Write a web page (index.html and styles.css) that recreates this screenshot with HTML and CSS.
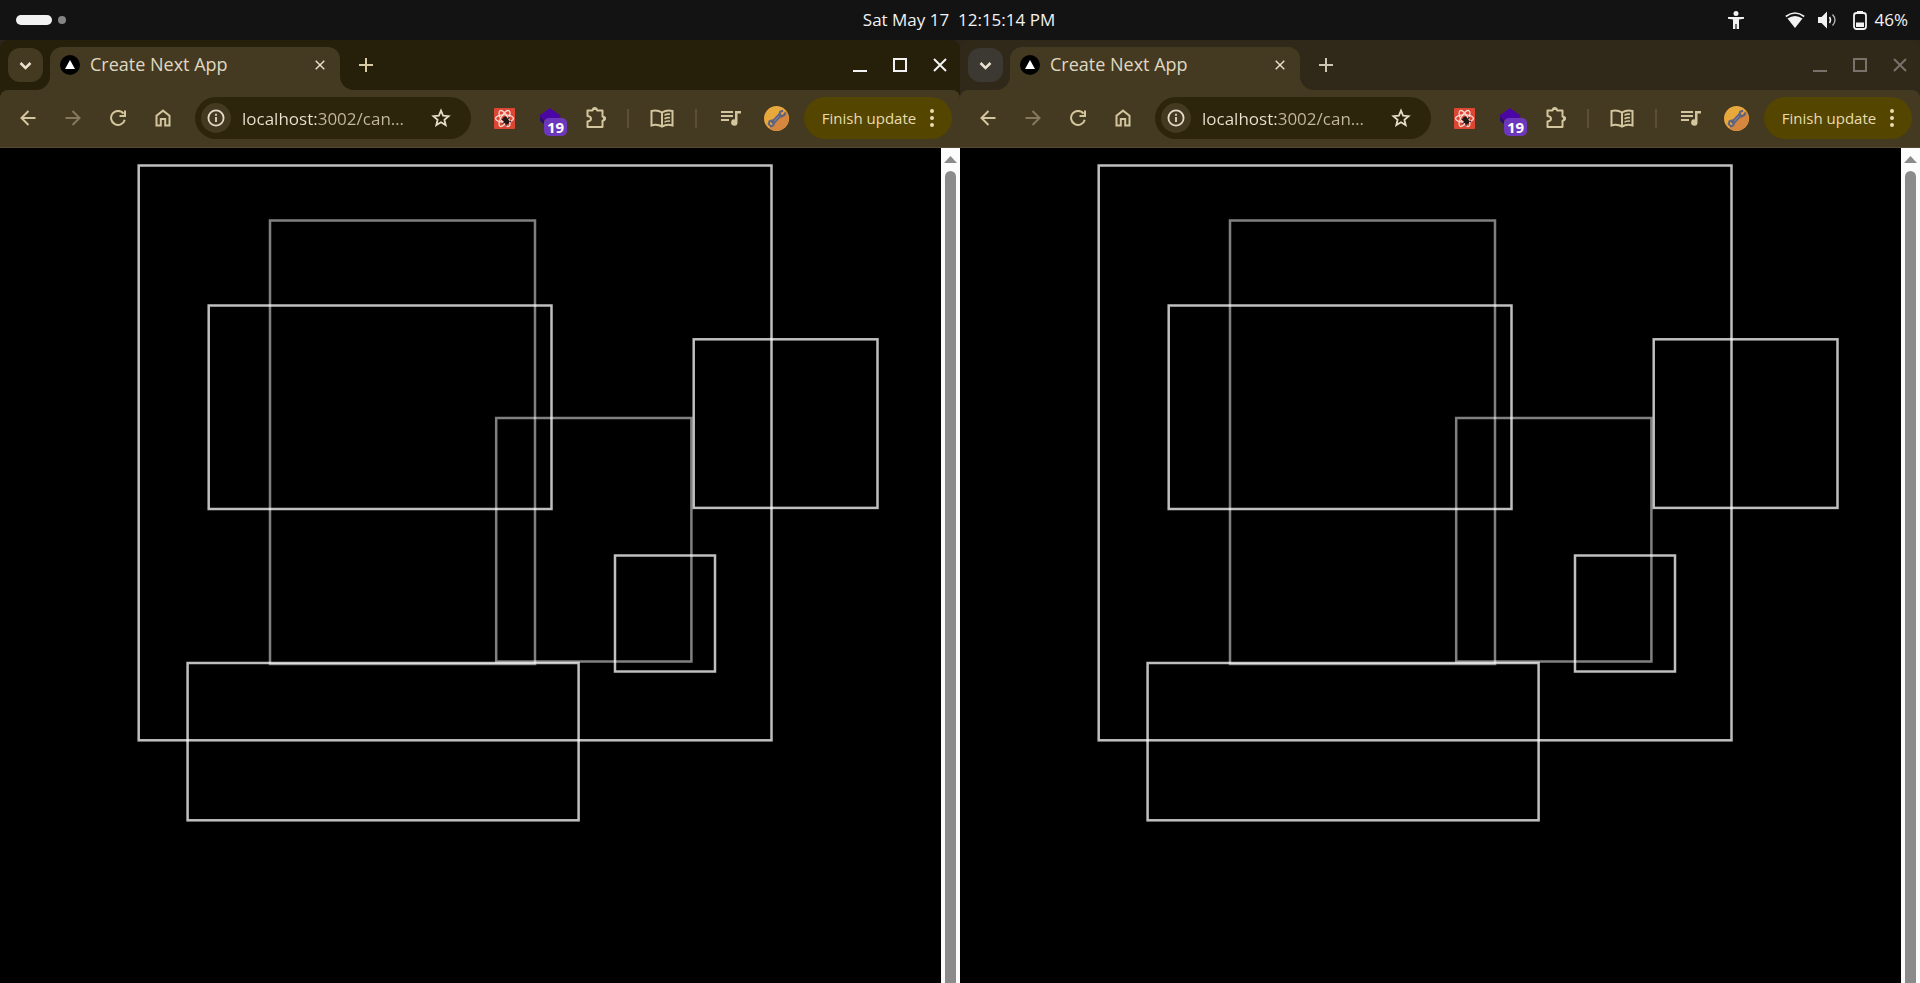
FILE: index.html
```html
<!DOCTYPE html>
<html lang="en">
<head>
<meta charset="utf-8">
<title>Desktop</title>
<link rel="stylesheet" href="styles.css">
</head>
<body>
<svg class="sprite" aria-hidden="true">
  <symbol id="chevron" viewBox="0 0 12 12"><path d="M2 4l4 4 4-4" fill="none" stroke="currentColor" stroke-width="2"/></symbol>
  <symbol id="triangle" viewBox="0 0 20 20"><circle cx="10" cy="10" r="10" fill="#000"/><path d="M10 5l5 9H5z" fill="#fff"/></symbol>
  <symbol id="cross" viewBox="0 0 14 14"><path d="M1 1l12 12M13 1L1 13" fill="none" stroke="currentColor" stroke-width="2"/></symbol>
  <symbol id="plus" viewBox="0 0 14 14"><path d="M7 0v14M0 7h14" fill="none" stroke="currentColor" stroke-width="2"/></symbol>
  <symbol id="minimize" viewBox="0 0 16 16"><path d="M1 14h14" stroke="currentColor" stroke-width="2"/></symbol>
  <symbol id="maximize" viewBox="0 0 16 16"><path d="M2 2h12v12H2z" fill="none" stroke="currentColor" stroke-width="2"/></symbol>
  <symbol id="back" viewBox="0 0 16 16"><path d="M15.500 8H2M8.500 1L1.500 8l7 7" fill="none" stroke="currentColor" stroke-width="2"/></symbol>
  <symbol id="forward" viewBox="0 0 16 16"><path d="M.5 8H14M7.500 1l7 7-7 7" fill="none" stroke="currentColor" stroke-width="2"/></symbol>
  <symbol id="reload" viewBox="0 0 16 16"><path d="M13.600 3.600A7 7 0 1 0 14.800 9.800M15 .5v5.500H9.500" fill="none" stroke="currentColor" stroke-width="2"/></symbol>
  <symbol id="home" viewBox="0 0 16 18"><path d="M1.500 16.500V6.700L8 1.600l6.500 5.100v9.800H10.200V10H5.800v6.500z" fill="none" stroke="currentColor" stroke-width="2"/></symbol>
  <symbol id="info" viewBox="0 0 18 18"><circle cx="9" cy="9" r="7.600" fill="none" stroke="currentColor" stroke-width="1.800"/><path d="M9 8v5M9 4.800v2" stroke="currentColor" stroke-width="1.800"/></symbol>
  <symbol id="star" viewBox="0 0 20 20"><path d="M10 2.600l2.100 5 5.500.5-4.200 3.600 1.300 5.400-4.700-2.900-4.700 2.900 1.300-5.400L2.400 8.100l5.500-.5z" fill="none" stroke="currentColor" stroke-width="1.800"/></symbol>
  <symbol id="atom" viewBox="0 0 21 21">
    <rect width="21" height="21" rx="1" fill="#db4733"/>
    <g fill="none" stroke="#f7dcd6" stroke-width="1.300"><ellipse cx="10.500" cy="10.500" rx="9" ry="3.600"/><ellipse cx="10.500" cy="10.500" rx="9" ry="3.600" transform="rotate(60 10.500 10.500)"/><ellipse cx="10.500" cy="10.500" rx="9" ry="3.600" transform="rotate(120 10.500 10.500)"/></g>
    <ellipse cx="12" cy="12.500" rx="2.400" ry="4" transform="rotate(-35 12 12.500)" fill="#231815"/><path d="M7.500 11l3 1.500M8.500 15.500l3-1.500M11 8.500v3M15.500 9l-2 2.500M17 13.500l-3-.5M12 18v-3M10 9l2 2" stroke="#231815" stroke-width="1.200"/>
  </symbol>
  <symbol id="cap" viewBox="0 0 22 22"><path d="M11 1l11 8-11 8L0 9z" fill="#4b06a6"/><path d="M1 10l4 3v4l-4-3z" fill="#2c0a72"/></symbol>
  <symbol id="puzzle" viewBox="0 0 22 22"><path d="M2.500 3.500H7.500Q8 1 9.800 1T12.200 3.500H17.500V9.500Q20 10 20 11.500T17.500 13.800V20H2.500V14.500Q6 14 6 11.700T2.500 9z" fill="none" stroke="currentColor" stroke-width="2" stroke-linejoin="round"/><path d="M7.500 3q.5-2.600 2.300-2.600T12.200 3zM18 9.300q3 .3 3 2.200t-3 2.300z" fill="currentColor"/></symbol>
  <symbol id="book" viewBox="0 0 24 19"><path d="M12 3.500Q7 .3 1.500 2V16.500Q7 14.800 12 17.500 17 14.800 22.500 16.500V2Q17 .3 12 3.500zV17" fill="none" stroke="currentColor" stroke-width="2"/><path d="M14.500 6.300q2.500-1.500 5.500-1M14.500 9.700q2.500-1.500 5.500-1M14.500 13.100q2.500-1.500 5.500-1" fill="none" stroke="currentColor" stroke-width="1.600"/></symbol>
  <symbol id="queue" viewBox="0 0 20 16"><path d="M0 2h12M0 6h12M0 10h8" stroke="currentColor" stroke-width="2"/><path d="M14 1h6v2.500h-3.500V12.500a3.200 3.200 0 1 1-2.500-3.100z" fill="currentColor"/></symbol>
  <symbol id="wrench" viewBox="0 0 25 25"><circle cx="12.500" cy="12.500" r="12.500" fill="#e9a83b"/><path d="M22 4.500A12.500 12.500 0 0 1 5 22.500z" fill="#d5873f"/><path d="M8 17.500L17 8" stroke="#5f6380" stroke-width="4"/><path d="M9 16.500l7.500-8" stroke="#8a8aa5" stroke-width="1"/><path d="M19 4.500l-3 1.500-.5 3 2 1.500 3-1.500.7-2.500M7 20.500l2.500-1.500.5-2.500-2-2-2.500.8-.8 2.700z" fill="none" stroke="#5f6380" stroke-width="2"/></symbol>
  <symbol id="dots" viewBox="0 0 4 18"><g fill="currentColor"><circle cx="2" cy="2" r="2"/><circle cx="2" cy="9" r="2"/><circle cx="2" cy="16" r="2"/></g></symbol>
  <symbol id="flare" viewBox="0 0 14 14"><path d="M0 14A14 14 0 0 0 14 0v14z" fill="currentColor"/></symbol>
  <symbol id="arrow-up" viewBox="0 0 13 7"><path d="M6.500 0L13 7H0z" fill="#8b8b8b"/></symbol>
  <symbol id="drawing" viewBox="0 0 941 835">
    <g fill="none" stroke="#fff" stroke-width="2.500">
      <g stroke-opacity=".75">
        <rect x="138.700" y="17.500" width="632.800" height="574.800"/>
        <rect x="208.700" y="157.500" width="342.800" height="203.500"/>
        <rect x="693.700" y="191.300" width="183.800" height="168.600"/>
        <rect x="615" y="407.500" width="100" height="116"/>
        <rect x="187.600" y="515" width="391" height="157.300"/>
      </g>
      <g stroke-opacity=".5">
        <rect x="270" y="72.500" width="265" height="443.500"/>
        <rect x="496.200" y="270" width="195.200" height="243.500"/>
      </g>
    </g>
  </symbol>
  <symbol id="person" viewBox="0 0 16 18"><circle cx="8" cy="2.500" r="2.500" fill="currentColor"/><path d="M0 6h16v1.800l-5 .7V18H8.600v-5H7.400v5H5V8.500L0 7.800z" fill="currentColor"/></symbol>
  <symbol id="wifi" viewBox="0 0 20 16"><path d="M.8 4.500Q10-2.500 19.200 4.500" fill="none" stroke="currentColor" stroke-width="1.600"/><path d="M2.500 6.500Q10 1.500 17.500 6.500L10 16z" fill="currentColor"/></symbol>
  <symbol id="volume" viewBox="0 0 19 18"><path d="M0 6h3.500L9 .5v17L3.500 12H0z" fill="currentColor"/><path d="M11.500 6q2 3 0 6" fill="none" stroke="currentColor" stroke-width="1.500"/><path d="M14.500 3.500q5 5.500 0 11" fill="none" stroke="currentColor" stroke-width="1.300" opacity=".75"/></symbol>
  <symbol id="battery" viewBox="0 0 14 19"><path d="M4 0h6v2H4z" fill="currentColor"/><rect x="1" y="2" width="12" height="16" rx="2.500" fill="none" stroke="currentColor" stroke-width="1.800"/><path d="M3 11.500h8V16H3z" fill="currentColor"/></symbol>
</svg>

<header class="panel">
  <button class="workspaces" aria-label="Workspaces"><span class="workspace-current"></span><span class="workspace-dot"></span></button>
  <time class="clock">Sat May 17 &nbsp;12:15:14 PM</time>
  <div class="status">
    <button class="status-item access" aria-label="Accessibility"><svg width="16" height="18"><use href="#person"/></svg></button>
    <svg width="20" height="16"><use href="#wifi"/></svg>
    <svg width="19" height="18"><use href="#volume"/></svg>
    <span class="status-item power"><svg width="14" height="19"><use href="#battery"/></svg>46%</span>
  </div>
</header>

<main class="desktop">
  <section class="window">
    <div class="tab-strip">
      <button class="tab-search" aria-label="Search tabs"><svg width="15" height="15"><use href="#chevron"/></svg></button>
      <div class="tab">
        <svg class="flare flare-left" width="14" height="14"><use href="#flare"/></svg>
        <svg width="20" height="20"><use href="#triangle"/></svg>
        <span class="tab-title">Create Next App</span>
        <button class="tab-close" aria-label="Close tab"><svg width="10" height="10"><use href="#cross"/></svg></button>
        <svg class="flare flare-right" width="14" height="14"><use href="#flare"/></svg>
      </div>
      <button class="new-tab" aria-label="New tab"><svg width="14" height="14"><use href="#plus"/></svg></button>
      <div class="window-controls">
        <button aria-label="Minimize"><svg width="16" height="16"><use href="#minimize"/></svg></button>
        <button aria-label="Maximize"><svg width="16" height="16"><use href="#maximize"/></svg></button>
        <button aria-label="Close"><svg width="14" height="14"><use href="#cross"/></svg></button>
      </div>
    </div>
    <nav class="toolbar">
      <button class="nav-button" aria-label="Back"><svg width="16" height="16"><use href="#back"/></svg></button>
      <button class="nav-button disabled" aria-label="Forward"><svg width="16" height="16"><use href="#forward"/></svg></button>
      <button class="nav-button" aria-label="Reload"><svg width="16" height="16"><use href="#reload"/></svg></button>
      <button class="nav-button" aria-label="Home"><svg width="16" height="18"><use href="#home"/></svg></button>
      <div class="address">
        <button class="site-info" aria-label="Site information"><svg width="18" height="18"><use href="#info"/></svg></button>
        <input class="url" type="text" aria-label="Address" value="localhost:3002/can…">
        <button class="bookmark" aria-label="Bookmark"><svg width="20" height="20"><use href="#star"/></svg></button>
      </div>
      <div class="extensions">
        <button class="extension" aria-label="React tools"><svg width="21" height="21"><use href="#atom"/></svg></button>
        <button class="extension" aria-label="Extension, 19 items"><svg width="22" height="22"><use href="#cap"/></svg><span class="badge">19</span></button>
        <button class="extension" aria-label="Extensions"><svg width="22" height="22"><use href="#puzzle"/></svg></button>
        <span class="divider"></span>
        <button class="reading" aria-label="Reading mode"><svg width="24" height="19"><use href="#book"/></svg></button>
        <span class="divider"></span>
        <button class="media" aria-label="Media"><svg width="20" height="16"><use href="#queue"/></svg></button>
        <button class="profile" aria-label="Profile"><svg width="25" height="25"><use href="#wrench"/></svg></button>
      </div>
      <button class="update">Finish update<svg width="4" height="18"><use href="#dots"/></svg></button>
    </nav>
    <div class="page">
      <svg class="canvas" viewBox="0 0 941 835" role="img" aria-label="Rectangles"><use href="#drawing"/></svg>
      <div class="scrollbar"><svg width="13" height="7"><use href="#arrow-up"/></svg><span class="thumb"></span></div>
    </div>
  </section>

  <section class="window inactive">
    <div class="tab-strip">
      <button class="tab-search" aria-label="Search tabs"><svg width="15" height="15"><use href="#chevron"/></svg></button>
      <div class="tab">
        <svg class="flare flare-left" width="14" height="14"><use href="#flare"/></svg>
        <svg width="20" height="20"><use href="#triangle"/></svg>
        <span class="tab-title">Create Next App</span>
        <button class="tab-close" aria-label="Close tab"><svg width="10" height="10"><use href="#cross"/></svg></button>
        <svg class="flare flare-right" width="14" height="14"><use href="#flare"/></svg>
      </div>
      <button class="new-tab" aria-label="New tab"><svg width="14" height="14"><use href="#plus"/></svg></button>
      <div class="window-controls">
        <button aria-label="Minimize"><svg width="16" height="16"><use href="#minimize"/></svg></button>
        <button aria-label="Maximize"><svg width="16" height="16"><use href="#maximize"/></svg></button>
        <button aria-label="Close"><svg width="14" height="14"><use href="#cross"/></svg></button>
      </div>
    </div>
    <nav class="toolbar">
      <button class="nav-button" aria-label="Back"><svg width="16" height="16"><use href="#back"/></svg></button>
      <button class="nav-button disabled" aria-label="Forward"><svg width="16" height="16"><use href="#forward"/></svg></button>
      <button class="nav-button" aria-label="Reload"><svg width="16" height="16"><use href="#reload"/></svg></button>
      <button class="nav-button" aria-label="Home"><svg width="16" height="18"><use href="#home"/></svg></button>
      <div class="address">
        <button class="site-info" aria-label="Site information"><svg width="18" height="18"><use href="#info"/></svg></button>
        <input class="url" type="text" aria-label="Address" value="localhost:3002/can…">
        <button class="bookmark" aria-label="Bookmark"><svg width="20" height="20"><use href="#star"/></svg></button>
      </div>
      <div class="extensions">
        <button class="extension" aria-label="React tools"><svg width="21" height="21"><use href="#atom"/></svg></button>
        <button class="extension" aria-label="Extension, 19 items"><svg width="22" height="22"><use href="#cap"/></svg><span class="badge">19</span></button>
        <button class="extension" aria-label="Extensions"><svg width="22" height="22"><use href="#puzzle"/></svg></button>
        <span class="divider"></span>
        <button class="reading" aria-label="Reading mode"><svg width="24" height="19"><use href="#book"/></svg></button>
        <span class="divider"></span>
        <button class="media" aria-label="Media"><svg width="20" height="16"><use href="#queue"/></svg></button>
        <button class="profile" aria-label="Profile"><svg width="25" height="25"><use href="#wrench"/></svg></button>
      </div>
      <button class="update">Finish update<svg width="4" height="18"><use href="#dots"/></svg></button>
    </nav>
    <div class="page">
      <svg class="canvas" viewBox="0 0 941 835" role="img" aria-label="Rectangles"><use href="#drawing"/></svg>
      <div class="scrollbar"><svg width="13" height="7"><use href="#arrow-up"/></svg><span class="thumb"></span></div>
    </div>
  </section>
</main>
</body>
</html>
```
FILE: styles.css
```css
* { box-sizing: border-box; }

body {
  margin: 0;
  height: 100vh;
  display: flex;
  flex-direction: column;
  overflow: hidden;
  background: #000;
  font-family: "Open Sans", "Noto Sans", sans-serif;
  font-size: 18px;
}

svg { display: block; flex: none; }
.sprite { position: absolute; width: 0; height: 0; }

button {
  display: flex;
  align-items: center;
  justify-content: center;
  flex: none;
  margin: 0;
  padding: 0;
  border: 0;
  background: none;
  color: inherit;
  font: inherit;
}

/* Top panel */
.panel {
  display: grid;
  grid-template-columns: 1fr auto 1fr;
  align-items: center;
  height: 40px;
  padding: 0 12px 2px 16px;
  background: #131313;
  color: #f2f2f2;
  font-size: 17px;
}
.workspaces { justify-self: start; gap: 6px; padding-top: 2px; }
.workspace-current { width: 36px; height: 10px; border-radius: 5px; background: #f2f2f2; }
.workspace-dot { width: 8px; height: 8px; border-radius: 50%; background: #858585; }
.clock { padding-right: 6px; white-space: nowrap; }
.status { display: flex; align-items: center; justify-content: flex-end; gap: 13px; padding-top: 2px; }
.status-item { display: flex; align-items: center; line-height: 20px; }
.access { margin-right: 28px; }
.power { gap: 8px; margin-left: 3px; }

/* Browser windows */
.desktop { display: flex; flex: 1; min-height: 0; background: #2c271c; }
.window {
  --strip: #261f09;
  --search: #433a21;
  --controls: #f2f2f2;
  --plus: #d8caa4;
  display: flex;
  flex: 1;
  flex-direction: column;
  min-width: 0;
  overflow: hidden;
  border-radius: 8px 8px 0 0;
  background: var(--strip);
  color: #e9e2d0;
}
.window.inactive {
  --strip: #30291a;
  --search: #3c3932;
  --controls: #77726a;
  --plus: #cfc6b2;
}

.tab-strip { display: flex; height: 50px; padding: 7px 6px 0 8px; }
.tab-search { width: 35px; height: 34px; margin: 1px 7px 0 0; border-radius: 12px; background: var(--search); }
.tab {
  position: relative;
  display: flex;
  align-items: center;
  flex: 0 1 290px;
  padding: 0 15px 7px 10px;
  border-radius: 12px 12px 0 0;
  background: #433a21;
}
.tab-title { flex: 1; padding: 0 0 2px 10px; white-space: nowrap; line-height: 24px; color: #e0d8c2; }
.flare { position: absolute; bottom: 0; color: #433a21; }
.flare-left { left: -14px; }
.flare-right { right: -14px; transform: scaleX(-1); }
.new-tab { height: 36px; width: 52px; color: var(--plus); }
.window-controls { display: flex; height: 36px; margin-left: auto; color: var(--controls); }
.window-controls button { width: 40px; }
.window-controls button:last-child { margin-right: -6px; }

.toolbar {
  display: flex;
  align-items: center;
  height: 58px;
  padding: 0 8px 1px 6px;
  border-bottom: 1px solid #544b36;
  border-radius: 8px 8px 0 0;
  background: #433a21;
  color: #d3c59e;
}
.nav-button { width: 44px; height: 42px; margin-right: 1px; }
.disabled { color: #857a5e; }
.address {
  display: flex;
  align-items: center;
  flex: 1;
  min-width: 0;
  height: 42px;
  margin: 0 10px 0 9px;
  padding: 0 20px 0 6px;
  border-radius: 21px;
  background: #2d240c;
  color: #e4dcc8;
}
.site-info { width: 30px; height: 30px; border-radius: 50%; background: #433a21; }
.url {
  flex: 1;
  min-width: 0;
  height: 30px;
  margin-left: 11px;
  padding: 0;
  border: 0;
  outline: 0;
  background: linear-gradient(90deg, #ede5d2 76px, #c4baa0 76px) text;
  color: transparent;
  font: inherit;
  font-size: 17px;
}
.extensions { display: flex; align-items: center; margin-right: 9px; }
.extension { position: relative; width: 46px; height: 42px; }
.badge {
  position: absolute;
  left: 17px;
  top: 21px;
  width: 23px;
  height: 18px;
  border-radius: 5px;
  background: #6d37bd;
  color: #fff;
  font-size: 15px;
  font-weight: 700;
  line-height: 18px;
  text-align: center;
}
.divider { width: 2px; height: 19px; margin: 0 8px; background: #5b5032; }
.reading { width: 50px; }
.media { width: 52px; }
.profile { width: 38px; }
.update {
  width: 148px;
  height: 42px;
  gap: 14px;
  border-radius: 21px;
  background: #544500;
  color: #e8dcaf;
  font-size: 15px;
  white-space: nowrap;
}

.page { display: flex; flex: 1; min-height: 0; align-items: stretch; background: #000; }
.canvas { flex: 1; min-width: 0; align-self: flex-start; }
.scrollbar {
  display: flex;
  flex-direction: column;
  align-items: center;
  width: 19px;
  padding-top: 8px;
  background: #fcfcfc;
}
.thumb { flex: 1; width: 11px; margin-top: 8px; border-radius: 6px 6px 0 0; background: #8b8b8b; }
```
